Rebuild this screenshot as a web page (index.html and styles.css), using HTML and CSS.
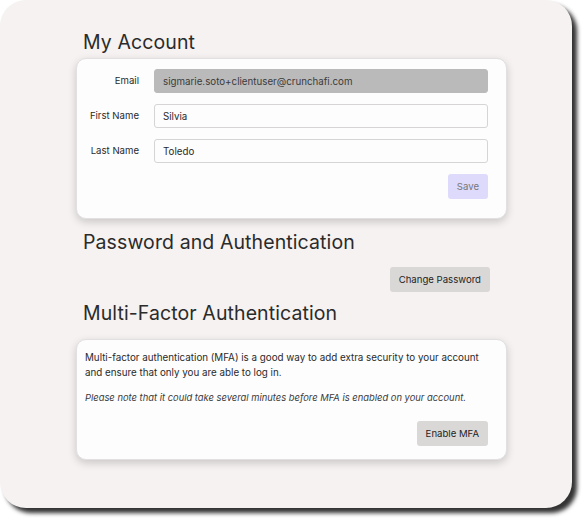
FILE: index.html
```html
<!DOCTYPE html>
<html>
  <head>
    <title>My Account</title>
    <link rel="stylesheet" href="styles.css">
  </head>
  <body>
    <div class="panel">
      <h2 class="heading">My Account</h2>
      <div class="card account">
        <div class="row">
          <label class="label">Email</label>
          <input class="field disabled" value="sigmarie.soto+clientuser@crunchafi.com" disabled>
        </div>
        <div class="row">
          <label class="label">First Name</label>
          <input class="field" value="Silvia">
        </div>
        <div class="row">
          <label class="label">Last Name</label>
          <input class="field" value="Toledo">
        </div>
        <div class="actions">
          <button class="btn save">Save</button>
        </div>
      </div>

      <h2 class="heading">Password and Authentication</h2>
      <div class="actions password">
        <button class="btn">Change Password</button>
      </div>

      <h2 class="heading">Multi-Factor Authentication</h2>
      <div class="card mfa">
        <p>Multi-factor authentication (MFA) is a good way to add extra security to your account and ensure that only you are able to log in.</p>
        <p class="note">Please note that it could take several minutes before MFA is enabled on your account.</p>
        <div class="actions">
          <button class="btn">Enable MFA</button>
        </div>
      </div>
    </div>
  </body>
</html>
```

FILE: styles.css
```css
body, h2, p, input, button {margin:0;padding:0}

body {
  background-color: #ffffff;
  font-family: 'Inter', 'Liberation Sans', sans-serif;
  color: #2a2a2a;
  min-height: 519px;
}

.panel {
  width: 572px;
  height: 508px;
  box-sizing: border-box;
  padding: 29px 0 0 76px;
  background-color: #f5f2f1;
  border-radius: 26px;
  box-shadow: 5px 5px 4px #333333;
}

.heading {
  font-size: 19.5px;
  font-weight: 400;
  line-height: 26px;
  margin-left: 7px;
  color: #2b2b2b;
  letter-spacing: 0.1px;
}

.card {
  width: 431px;
  box-sizing: border-box;
  background-color: #fdfdfd;
  border: 1px solid #e2e0e0;
  border-radius: 10px;
  box-shadow: 0 3px 8px rgba(0, 0, 0, 0.18);
}

.account {
  margin-top: 3px;
  height: 161px;
  padding: 10px 18px 0 0;
  margin-bottom: 10px;
}

.row {
  display: flex;
  align-items: center;
  margin-bottom: 11px;
}

.label {
  width: 62px;
  text-align: right;
  font-size: 9.6px;
  margin-right: 15px;
  margin-top: -1px;
  color: #2a2a2a;
}

.field {
  flex: 1;
  height: 24px;
  box-sizing: border-box;
  border: 1px solid #d6d4d4;
  border-radius: 3px;
  background-color: #fdfdfd;
  padding: 0 8px;
  font-family: inherit;
  font-size: 9.75px;
  color: #2a2a2a;
}

.field.disabled {
  background-color: #bbbaba;
  border-color: #bbbaba;
  color: #3a3a3a;
}

.actions {
  display: flex;
  justify-content: flex-end;
}

.btn {
  height: 25px;
  padding: 0 9px;
  border: none;
  border-radius: 3px;
  background-color: #d9d8d7;
  font-family: inherit;
  font-size: 9.6px;
  color: #1e1e1e;
}

.save {
  background-color: #dedafc;
  color: #777777;
}

.password {
  width: 414px;
  margin: 12px 0 8px;
}

.mfa {
  margin-top: 13px;
  height: 121px;
  padding: 10px 18px 0 8px;
}

.mfa p {
  font-size: 9.8px;
  line-height: 15px;
  margin-bottom: 10px;
}

.mfa .note {
  font-size: 9.4px;
  font-style: italic;
  color: #3a3a3a;
  margin-bottom: 16px;
}
```
